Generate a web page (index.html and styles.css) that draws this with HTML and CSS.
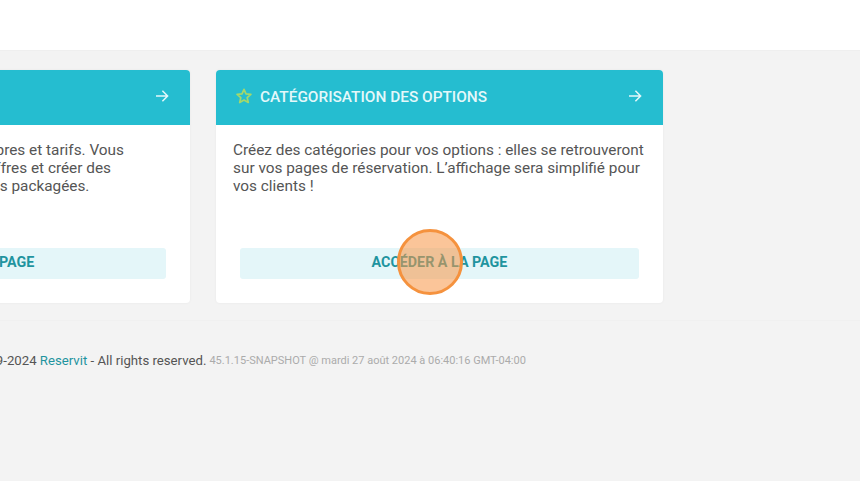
FILE: index.html
```html
<!DOCTYPE html>
<html lang="fr">
<head>
<meta charset="utf-8">
<title>Reservit</title>
<link rel="stylesheet" href="styles.css">
</head>
<body>
<header class="topbar"></header>
<main class="content">
  <section class="cards">
    <article class="card">
      <div class="card-head">
        <span class="card-title">GESTION DES OFFRES</span>
        <svg class="arrow" viewBox="0 0 14 14"><path d="M1 7h11.4M7.4 1.8 12.600 7l-5.200 5.200"/></svg>
      </div>
      <div class="card-body">
        <p class="card-text">Définissez tous vos types de chambres et tarifs. Vous<br>pouvez aussi ajouter et lister vos offres et créer des<br>séjours, formules et nouvelles offres packagées.</p>
        <a class="card-btn" href="#">ACCÉDER À LA PAGE</a>
      </div>
    </article>
    <article class="card">
      <div class="card-head">
        <span class="card-title">
          <svg class="star" viewBox="0 0 16 16"><path d="M8 1.4 10 5.900l4.900.5-3.700 3.300 1.100 4.800L8 12l-4.300 2.500 1.100-4.800L1.100 6.400l4.900-.5Z"/></svg>
          CATÉGORISATION DES OPTIONS
        </span>
        <svg class="arrow" viewBox="0 0 14 14"><path d="M1 7h11.4M7.4 1.800 12.600 7l-5.200 5.200"/></svg>
      </div>
      <div class="card-body">
        <p class="card-text">Créez des catégories pour vos options : elles se retrouveront sur vos pages de réservation. L’affichage sera simplifié pour vos clients !</p>
        <a class="card-btn" href="#">ACCÉDER À LA PAGE</a>
      </div>
    </article>
  </section>
  <footer class="footer">
    <span class="copy">© 2009-2024 <a class="brand" href="#">Reservit</a> - All rights reserved.</span>
    <span class="build">45.1.15-SNAPSHOT @ mardi 27 août 2024 à 06:40:16 GMT-04:00</span>
  </footer>
</main>
<div class="click-dot"></div>
</body>
</html>
```
FILE: styles.css
```css
html, body {
  margin: 0;
  height: 100%;
  overflow: hidden;
}
body {
  position: relative;
  background: #f3f3f3;
  font-family: Roboto, "Liberation Sans", sans-serif;
  color: #555555;
}
.topbar {
  height: 50px;
  background: #fff;
  border-bottom: 1px solid #efefef;
}
.content {
  display: flex;
  flex-direction: column;
}
.cards {
  display: flex;
  gap: 26px;
  margin: 19px 0 0 -257px;
  flex: none;
}
.card {
  flex: none;
  width: 447px;
  height: 233px;
  background: #fff;
  border-radius: 4px;
  box-shadow: 0 0 3px rgba(0, 0, 0, .05);
  display: flex;
  flex-direction: column;
}
.card-head {
  height: 55px;
  flex: none;
  box-sizing: border-box;
  padding: 0 21px 2px 20px;
  background: #25bdd0;
  border-radius: 4px 4px 0 0;
  display: flex;
  align-items: center;
  justify-content: space-between;
}
.card-title {
  display: flex;
  align-items: center;
  gap: 8px;
  color: #e4f8fa;
  font-size: 15.4px;
  font-weight: 500;
}
.star {
  width: 16px;
  height: 16px;
  margin-top: -2px;
  fill: none;
  stroke: #a5d86a;
  stroke-width: 1.700;
  stroke-linejoin: round;
}
.arrow {
  width: 14px;
  height: 14px;
  margin-top: -1px;
  fill: none;
  stroke: #e4f8fa;
  stroke-width: 1.500;
}
.card-body {
  flex: 1;
  display: flex;
  flex-direction: column;
  padding: 16px 17px 24px 17px;
}
.card-text {
  margin: 0;
  font-size: 15.35px;
  line-height: 18px;
  height: 90px;
}
.card-btn {
  margin: auto 7px 0 7px;
  height: 31px;
  padding-bottom: 3px;
  box-sizing: border-box;
  display: flex;
  align-items: center;
  justify-content: center;
  background: #e4f6f9;
  border-radius: 3px;
  color: #1f949f;
  font-size: 14.3px;
  font-weight: 700;
  text-decoration: none;
}
.footer {
  margin-top: 17px;
  height: 62px;
  box-sizing: border-box;
  border-top: 1px solid #f0f0f0;
  display: flex;
  align-items: center;
  gap: 3px;
  margin-left: -40px;
  white-space: nowrap;
  padding-top: 17px;
}
.copy {
  font-size: 13.2px;
}
.brand {
  color: #1f949f;
  text-decoration: none;
}
.build {
  font-size: 11px;
  color: #ababab;
}
.click-dot {
  position: absolute;
  left: 397px;
  top: 229px;
  width: 66px;
  height: 66px;
  box-sizing: border-box;
  border-radius: 50%;
  border: 3px solid #f5923e;
  background: rgba(247, 150, 70, .55);
}
```
